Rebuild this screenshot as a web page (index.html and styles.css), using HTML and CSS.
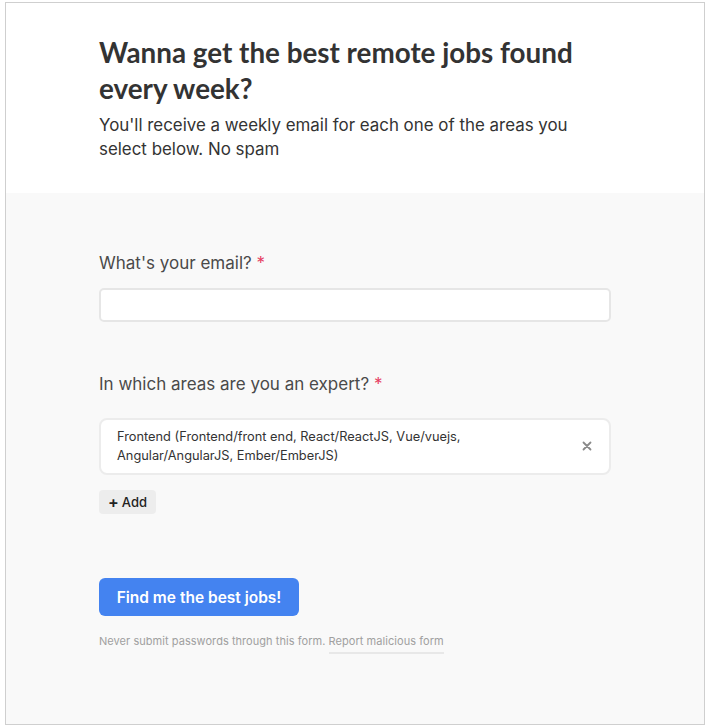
FILE: index.html
```html
<!DOCTYPE html>
<html lang="en">
<head>
<meta charset="utf-8">
<title>Remote jobs</title>
<link rel="stylesheet" href="styles.css">
</head>
<body>
<div class="frame">
  <header class="intro">
    <div class="col">
      <h1 class="title">Wanna get the best remote jobs found every week?</h1>
      <p class="lead">You'll receive a weekly email for each one of the areas you select below. No spam</p>
    </div>
  </header>
  <main class="form">
    <div class="col">
      <div class="field">
        <label class="label">What's your email? <span class="req">*</span></label>
        <input class="input" type="email">
      </div>
      <div class="field field-areas">
        <label class="label">In which areas are you an expert? <span class="req">*</span></label>
        <div class="chip">
          <span class="chip-text">Frontend (Frontend/front end, React/ReactJS, Vue/vuejs, Angular/AngularJS, Ember/EmberJS)</span>
          <svg class="chip-x" width="10" height="10" viewBox="0 0 10 10"><path d="M1.5 1.5 L8.5 8.5 M8.5 1.5 L1.5 8.5" stroke="#8a8a8a" stroke-width="1.8" stroke-linecap="round"/></svg>
        </div>
        <button class="add" type="button"><span class="plus">+</span> Add</button>
      </div>
      <button class="submit" type="button">Find me the best jobs!</button>
      <p class="note">Never submit passwords through this form. <span class="report">Report malicious form</span></p>
    </div>
  </main>
</div>
</body>
</html>
```
FILE: styles.css
```css
html, body {
  margin: 0;
  padding: 0;
  background: #ffffff;
}
body {
  padding: 2px 6px 2px 5px;
  font-family: "Inter", "Noto Sans", sans-serif;
  color: #333;
}
.frame {
  width: 698px;
  height: 721px;
  border: 1px solid #cfcfcf;
  background: #f9f9f9;
  display: flex;
  flex-direction: column;
}
.col {
  width: 512px;
  margin: 0 auto;
}
.intro {
  background: #fff;
  height: 190px;
  box-sizing: border-box;
  padding-top: 32px;
}
.title {
  margin: 0;
  font-family: "Lato", sans-serif;
  font-weight: 700;
  font-size: 27.8px;
  line-height: 36px;
  color: #333;
  letter-spacing: 0;
}
.lead {
  margin: 6px 0 0;
  font-size: 16.9px;
  line-height: 24px;
  color: #333;
}
.form {
  flex: 1;
  padding-top: 58px;
}
.field {
  display: flex;
  flex-direction: column;
  align-items: flex-start;
}
.label {
  font-size: 17px;
  line-height: 24px;
  color: #4a4a4a;
  margin-bottom: 13px;
}
.req {
  color: #e63e63;
}
.input {
  width: 512px;
  height: 34px;
  box-sizing: border-box;
  border: 2px solid #e6e6e6;
  border-radius: 5px;
  background: #fff;
  margin: 0;
}
.field-areas {
  margin-top: 50px;
}
.field-areas .label {
  margin-bottom: 22px;
}
.chip {
  width: 512px;
  box-sizing: border-box;
  border: 2px solid #ececec;
  border-radius: 8px;
  background: #fff;
  display: flex;
  align-items: center;
  justify-content: space-between;
  padding: 7px 17px 8px 16px;
}
.chip-text {
  font-size: 12.8px;
  line-height: 19px;
  color: #333;
  max-width: 420px;
}
.chip-x {
  flex: none;
}
.add {
  margin-top: 15px;
  background: #ededed;
  border: none;
  border-radius: 4px;
  height: 24px;
  padding: 0 9px 0 9px;
  font-family: "Inter", sans-serif;
  font-size: 13px;
  font-weight: 500;
  color: #222;
  display: flex;
  align-items: center;
  gap: 3px;
}
.plus {
  font-size: 16px;
  font-weight: 600;
  line-height: 1;
}
.submit {
  display: block;
  margin-top: 64px;
  width: 200px;
  height: 38px;
  border: none;
  border-radius: 6px;
  background: #4483f0;
  color: #fff;
  font-family: "Inter", sans-serif;
  font-weight: 600;
  font-size: 15.5px;
  padding: 0;
}
.note {
  margin: 18px 0 0;
  font-size: 11px;
  color: #a0a0a0;
  letter-spacing: 0.05px;
}
.report {
  border-bottom: 2px solid #e8e8e8;
  padding-bottom: 4px;
}
```
